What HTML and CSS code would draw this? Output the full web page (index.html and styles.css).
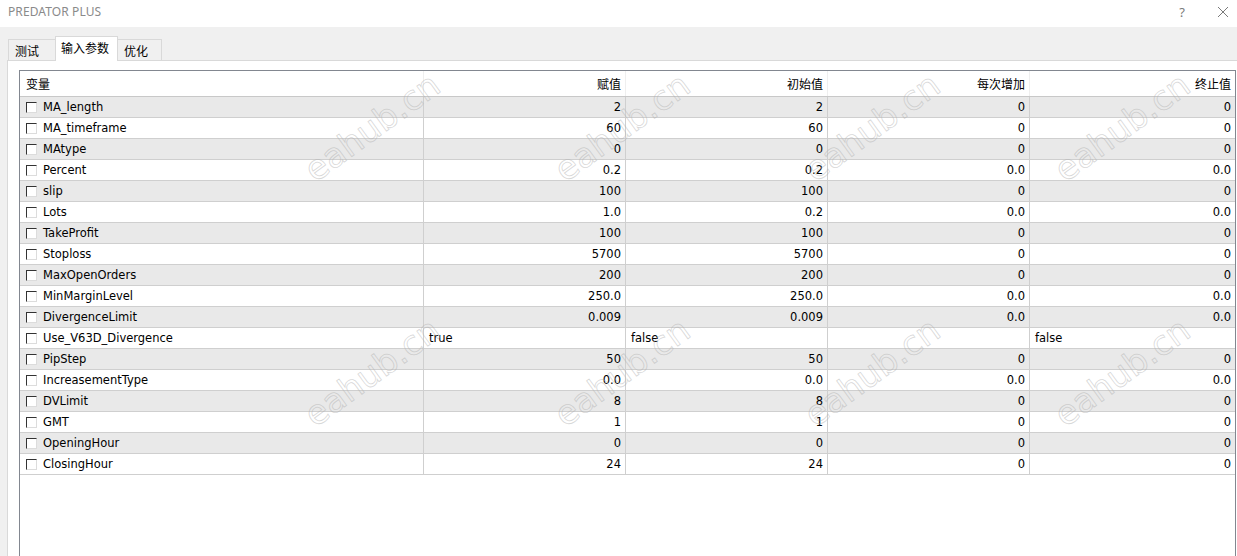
FILE: index.html
```html
<!DOCTYPE html>
<html lang="zh">
<head>
<meta charset="utf-8">
<title>PREDATOR PLUS</title>
<link rel="stylesheet" href="styles.css">
</head>
<body>
<div class="window">
  <div class="titlebar">
    <span class="title">PREDATOR PLUS</span>
    <div class="tb-buttons">
      <span class="tb-help">?</span>
      <svg class="tb-close" width="12" height="12" viewBox="0 0 12 12"><path d="M1 1L11 11M11 1L1 11" stroke="#7a7a7a" stroke-width="1" fill="none"/></svg>
    </div>
  </div>
  <div class="tabs">
    <div class="tab">测试</div>
    <div class="tab active">输入参数</div>
    <div class="tab">优化</div>
  </div>
  <div class="panel">
    <div class="grid">
      <div class="row head">
        <div class="cell name">变量</div>
        <div class="cell num">赋值</div>
        <div class="cell num">初始值</div>
        <div class="cell num">每次增加</div>
        <div class="cell num">终止值</div>
      </div>
      <div class="row alt"><div class="cell name"><span class="cb"></span>MA_length</div><div class="cell num">2</div><div class="cell num">2</div><div class="cell num">0</div><div class="cell num">0</div></div>
      <div class="row"><div class="cell name"><span class="cb"></span>MA_timeframe</div><div class="cell num">60</div><div class="cell num">60</div><div class="cell num">0</div><div class="cell num">0</div></div>
      <div class="row alt"><div class="cell name"><span class="cb"></span>MAtype</div><div class="cell num">0</div><div class="cell num">0</div><div class="cell num">0</div><div class="cell num">0</div></div>
      <div class="row"><div class="cell name"><span class="cb"></span>Percent</div><div class="cell num">0.2</div><div class="cell num">0.2</div><div class="cell num">0.0</div><div class="cell num">0.0</div></div>
      <div class="row alt"><div class="cell name"><span class="cb"></span>slip</div><div class="cell num">100</div><div class="cell num">100</div><div class="cell num">0</div><div class="cell num">0</div></div>
      <div class="row"><div class="cell name"><span class="cb"></span>Lots</div><div class="cell num">1.0</div><div class="cell num">0.2</div><div class="cell num">0.0</div><div class="cell num">0.0</div></div>
      <div class="row alt"><div class="cell name"><span class="cb"></span>TakeProfit</div><div class="cell num">100</div><div class="cell num">100</div><div class="cell num">0</div><div class="cell num">0</div></div>
      <div class="row"><div class="cell name"><span class="cb"></span>Stoploss</div><div class="cell num">5700</div><div class="cell num">5700</div><div class="cell num">0</div><div class="cell num">0</div></div>
      <div class="row alt"><div class="cell name"><span class="cb"></span>MaxOpenOrders</div><div class="cell num">200</div><div class="cell num">200</div><div class="cell num">0</div><div class="cell num">0</div></div>
      <div class="row"><div class="cell name"><span class="cb"></span>MinMarginLevel</div><div class="cell num">250.0</div><div class="cell num">250.0</div><div class="cell num">0.0</div><div class="cell num">0.0</div></div>
      <div class="row alt"><div class="cell name"><span class="cb"></span>DivergenceLimit</div><div class="cell num">0.009</div><div class="cell num">0.009</div><div class="cell num">0.0</div><div class="cell num">0.0</div></div>
      <div class="row"><div class="cell name"><span class="cb"></span>Use_V63D_Divergence</div><div class="cell txt">true</div><div class="cell txt">false</div><div class="cell txt"></div><div class="cell txt">false</div></div>
      <div class="row alt"><div class="cell name"><span class="cb"></span>PipStep</div><div class="cell num">50</div><div class="cell num">50</div><div class="cell num">0</div><div class="cell num">0</div></div>
      <div class="row"><div class="cell name"><span class="cb"></span>IncreasementType</div><div class="cell num">0.0</div><div class="cell num">0.0</div><div class="cell num">0.0</div><div class="cell num">0.0</div></div>
      <div class="row alt"><div class="cell name"><span class="cb"></span>DVLimit</div><div class="cell num">8</div><div class="cell num">8</div><div class="cell num">0</div><div class="cell num">0</div></div>
      <div class="row"><div class="cell name"><span class="cb"></span>GMT</div><div class="cell num">1</div><div class="cell num">1</div><div class="cell num">0</div><div class="cell num">0</div></div>
      <div class="row alt"><div class="cell name"><span class="cb"></span>OpeningHour</div><div class="cell num">0</div><div class="cell num">0</div><div class="cell num">0</div><div class="cell num">0</div></div>
      <div class="row"><div class="cell name"><span class="cb"></span>ClosingHour</div><div class="cell num">24</div><div class="cell num">24</div><div class="cell num">0</div><div class="cell num">0</div></div>
    </div>
  </div>
  <div class="watermarks" aria-hidden="true">
    <span class="wm wm1">eahub.cn</span>
    <span class="wm wm2">eahub.cn</span>
    <span class="wm wm3">eahub.cn</span>
    <span class="wm wm4">eahub.cn</span>
    <span class="wm wm5">eahub.cn</span>
    <span class="wm wm6">eahub.cn</span>
    <span class="wm wm7">eahub.cn</span>
    <span class="wm wm8">eahub.cn</span>
  </div>
</div>
</body>
</html>
```

FILE: styles.css
```css
html, body {
  margin: 0;
  padding: 0;
  height: 100%;
  overflow: hidden;
}
body {
  background: #f0f0f0;
  font-family: "DejaVu Sans", "Noto Sans CJK SC", sans-serif;
  font-size: 11.5px;
  color: #000;
}
.window {
  position: relative;
  height: 556px;
  display: flex;
  flex-direction: column;
}
.titlebar {
  height: 27px;
  background: #fff;
  display: flex;
  align-items: center;
  justify-content: space-between;
  padding: 0 0 0 8px;
  flex: none;
}
.title {
  font-family: "Noto Sans", "Liberation Sans", sans-serif;
  font-size: 12px;
  color: #8a8a8a;
  letter-spacing: 0.1px;
  margin-top: -4px;
}
.tb-buttons {
  display: flex;
  align-items: center;
  gap: 32px;
  padding-right: 8px;
  margin-top: -4px;
}
.tb-help {
  font-family: "Noto Sans", sans-serif;
  font-size: 13px;
  color: #7a7a7a;
}
.tabs {
  height: 34px;
  display: flex;
  align-items: flex-end;
  padding-left: 8px;
  flex: none;
}
.tab {
  height: 22px;
  border: 1px solid #d9d9d9;
  border-bottom: none;
  background: #f0f0f0;
  padding: 0 6px;
  display: flex;
  align-items: center;
  font-family: "Noto Sans CJK SC", sans-serif;
  font-size: 12px;
  box-sizing: border-box;
  width: 48px;
}
.tab.active {
  height: 25px;
  background: #fff;
  width: 63px;
  padding: 0 5px 3px;
  margin: 0 -1px 0 -1px;
  position: relative;
  z-index: 1;
}
.tab:last-child {
  width: 45px;
}
.panel {
  flex: 1;
  margin-left: 7px;
  background: #fff;
  border-left: 1px solid #d9d9d9;
  border-top: 1px solid #d9d9d9;
  padding: 9px 0 0 11px;
  margin-top: -1px;
  display: flex;
  flex-direction: column;
}
.grid {
  flex: 1;
  border: 1px solid #828790;
  border-bottom: none;
  margin-right: 1px;
  background: #fff;
}
.row {
  display: grid;
  grid-template-columns: 404px 202px 202px 202px 1fr;
  height: 21px;
  box-sizing: border-box;
  border-bottom: 1px solid #cfcfcf;
}
.row.alt {
  background: #e9e9e9;
}
.row.head {
  height: 26px;
  background: #fff;
  border-bottom: 1px solid #c8c8c8;
}
.cell {
  display: flex;
  align-items: center;
  padding: 0 5px 0 6px;
  border-right: 1px solid #cfcfcf;
  white-space: nowrap;
  overflow: hidden;
}
.cell:last-child {
  border-right: none;
}
.head .cell {
  border-right-color: #efefef;
  font-family: "Noto Sans CJK SC", sans-serif;
  font-size: 12px;
}
.num {
  justify-content: flex-end;
  padding-right: 4px;
}
.txt {
  justify-content: flex-start;
  padding-left: 5px;
}
.cb {
  width: 11px;
  height: 11px;
  box-sizing: border-box;
  border-top: 1px solid #333;
  border-left: 1px solid #333;
  border-right: 1px solid #dcdcdc;
  border-bottom: 1px solid #dcdcdc;
  background: #fff;
  margin-right: 6px;
  flex: none;
}
.watermarks {
  position: absolute;
  inset: 0;
  pointer-events: none;
}
.wm {
  position: absolute;
  font-family: "DejaVu Sans", sans-serif;
  font-size: 34px;
  color: transparent;
  -webkit-text-stroke: 0.8px rgba(175, 175, 175, 0.5);
  transform: translate(-50%, -50%) rotate(-36deg);
  white-space: nowrap;
  line-height: 1;
}
.wm1 { left: 372px; top: 127px; }
.wm2 { left: 622px; top: 127px; }
.wm3 { left: 872px; top: 127px; }
.wm4 { left: 1122px; top: 127px; }
.wm5 { left: 372px; top: 372px; }
.wm6 { left: 622px; top: 372px; }
.wm7 { left: 872px; top: 372px; }
.wm8 { left: 1122px; top: 372px; }
```
